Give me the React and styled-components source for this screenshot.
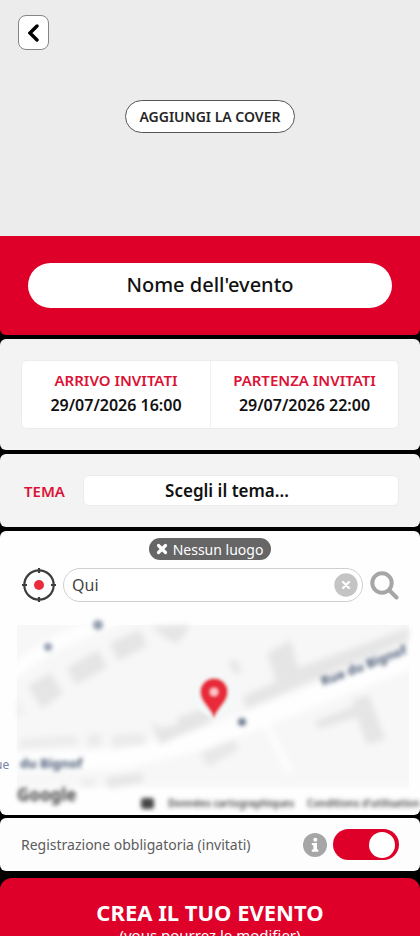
import React, { useState } from "react";
import styled, { createGlobalStyle } from "styled-components";

const RED = "#df0029";

function MapPreview() {
  return (
    <MapDrawing
      viewBox="0 0 420 200"
      preserveAspectRatio="xMidYMid slice"
      role="img"
      aria-label="Mappa"
    >
      <defs>
        <filter id="soft" x="-10%" y="-10%" width="120%" height="120%">
          <feGaussianBlur stdDeviation="3" />
        </filter>
        <filter id="softText" x="-10%" y="-10%" width="120%" height="120%">
          <feGaussianBlur stdDeviation="2.3" />
        </filter>
        <filter id="softPin" x="-50%" y="-50%" width="200%" height="200%">
          <feGaussianBlur stdDeviation="1.8" />
        </filter>
      </defs>

      <g>
        <rect x="17" y="12" width="392" height="164" fill="#f7f7f7" />
        <g filter="url(#soft)">
          {/* roads */}
          <g fill="none" stroke="#fefefe">
            <path d="M0 150 L120 146 L205 126 L430 38" strokeWidth="20" />
            <path d="M267 112 L290 160" strokeWidth="6" />
            <path d="M6 64 L50 32 L118 4" strokeWidth="14" />
            <path d="M0 186 H420" strokeWidth="24" />
          </g>
          {/* buildings */}
          <g fill="#e5e5e5">
            <path d="M28 73 L50 60 L63 80 L42 96Z" />
            <path d="M67 55 L98 37 L107 54 L76 72Z" />
            <path d="M110 30 L140 17 L147 33 L118 48Z" />
            <path d="M152 14 L190 12 L186 20 L176 31 L164 24Z" />
            <path d="M17 85 L25 98 L17 106Z" fill="#eeeeee" />
            <path d="M20 126 L76 122 L78 132 L20 136Z" fill="#ececec" />
            <path d="M87 122 L101 120 L102 133 L88 135Z" fill="#ebebeb" />
            <path d="M112 122 L144 120 L146 132 L112 135Z" fill="#ebebeb" />
            <path d="M151 108 L160 115 L177 112 L178 104 L206 95 L212 108 L160 132Z" />
            <path d="M80 168 L95 165 L96 173 L82 175Z" fill="#ececec" />
            <path d="M106 164 L142 160 L144 169 L108 176Z" fill="#e6e6e6" />
            <path d="M200 140 L234 126 L239 136 L208 154Z" fill="#e8e8e8" />
            <path d="M228 50 L236 47 L242 59 L236 61Z" fill="#e4e4e4" />
            <path d="M243 83 L276 69 L267 40 L291 27 L298 55 L408 15 L409 26 L246 96Z" />
            <path d="M315 108 L354 93 L352 87 L369 82 L385 126 L367 132 L357 104 L319 116Z" />
          </g>
        </g>
      </g>

      <g filter="url(#softText)" fill="#4a5a76">
        <circle cx="48" cy="34" r="4" opacity="0.6" />
        <circle cx="98" cy="12" r="5" opacity="0.6" />
        <circle cx="242" cy="109" r="4" opacity="0.8" />
        <StreetName transform="translate(323 73) rotate(-21)">
          Rue du Bignof
        </StreetName>
        <StreetName x="20" y="155">
          du Bignof
        </StreetName>
      </g>
      <EdgeName x="-5" y="156">
        ue
      </EdgeName>

      <g filter="url(#softText)" fill="#444444">
        <GoogleMark x="17" y="188">
          Google
        </GoogleMark>
        <rect x="141" y="185" width="13" height="11" rx="3" />
        <MapCredit x="168" y="194">
          Données cartographiques
        </MapCredit>
        <MapCredit x="307" y="194">
          Conditions d'utilisation
        </MapCredit>
      </g>

      <g filter="url(#softPin)">
        <circle cx="214" cy="83" r="20" fill="#f3f8f8" />
        <path
          d="M214 105 C210 95 200 89 200 79 A14 14 0 0 1 228 79 C228 89 218 95 214 105Z"
          fill="#e82c3b"
        />
        <circle cx="214" cy="79" r="4" fill="#ffc5c9" />
      </g>
    </MapDrawing>
  );
}

function App() {
  const [name, setName] = useState("");
  const [place, setPlace] = useState("Qui");
  const [registration, setRegistration] = useState(true);

  return (
    <Page>
      <GlobalStyle />

      <Cover>
        <BackButton type="button" aria-label="Indietro">
          <svg width="12" height="20" viewBox="0 0 12 20">
            <path
              d="M9 3 L2 10 L9 17"
              fill="none"
              stroke="#000"
              strokeWidth="3.4"
              strokeLinecap="round"
              strokeLinejoin="miter"
            />
          </svg>
        </BackButton>
        <CoverButton type="button">AGGIUNGI LA COVER</CoverButton>
      </Cover>

      <NamePanel>
        <NameInput
          aria-label="Nome dell'evento"
          placeholder="Nome dell'evento"
          value={name}
          onChange={(event) => setName(event.target.value)}
        />
      </NamePanel>

      <Panel $pad="21px 21px">
        <Dates>
          <DateButton type="button">
            <Caption>ARRIVO INVITATI</Caption>
            <span>29/07/2026 16:00</span>
          </DateButton>
          <DateButton type="button">
            <Caption>PARTENZA INVITATI</Caption>
            <span>29/07/2026 22:00</span>
          </DateButton>
        </Dates>
      </Panel>

      <Panel $pad="21px 21px">
        <ThemeRow>
          <Caption as="label" htmlFor="theme">
            TEMA
          </Caption>
          <ThemeSelect id="theme">
            <option>Scegli il tema...</option>
          </ThemeSelect>
        </ThemeRow>
      </Panel>

      <PlacePanel>
        <PlaceTag type="button">
          <svg width="12" height="12" viewBox="0 0 12 12">
            <path
              d="M2.5 2.5 L9.5 9.5 M9.5 2.5 L2.5 9.5"
              stroke="#fff"
              strokeWidth="3.2"
              strokeLinecap="round"
            />
          </svg>
          Nessun luogo
        </PlaceTag>
        <SearchRow>
          <IconButton type="button" aria-label="La mia posizione">
            <svg width="34" height="34" viewBox="0 0 34 34">
              <g fill="none" stroke="#3d3d3d">
                <circle cx="17" cy="17" r="14.7" strokeWidth="2.2" />
                <path
                  d="M17 0 V5 M17 29 V34 M0 17 H5 M29 17 H34"
                  strokeWidth="2.2"
                />
              </g>
              <circle cx="17" cy="17" r="5" fill="#ea2b3b" />
            </svg>
          </IconButton>
          <SearchField>
            <SearchInput
              aria-label="Luogo"
              value={place}
              onChange={(event) => setPlace(event.target.value)}
            />
            <IconButton
              type="button"
              aria-label="Cancella"
              onClick={() => setPlace("")}
            >
              <svg width="24" height="24" viewBox="0 0 24 24">
                <circle cx="12" cy="12" r="11.7" fill="#c4c4c4" />
                <path
                  d="M9 9 L15 15 M15 9 L9 15"
                  stroke="#fff"
                  strokeWidth="2.4"
                  strokeLinecap="round"
                />
              </svg>
            </IconButton>
          </SearchField>
          <IconButton type="button" aria-label="Cerca">
            <svg width="29" height="29" viewBox="0 0 29 29">
              <g fill="none" stroke="#a6a6a6">
                <circle cx="12" cy="12" r="9.7" strokeWidth="4" />
                <path
                  d="M19.5 19.5 L26.5 26.5"
                  strokeWidth="4"
                  strokeLinecap="round"
                />
              </g>
            </svg>
          </IconButton>
        </SearchRow>
        <MapPreview />
      </PlacePanel>

      <RegistrationPanel>
        <RegistrationLabel htmlFor="registration">
          Registrazione obbligatoria (invitati)
        </RegistrationLabel>
        <IconButton type="button" aria-label="Informazioni">
          <svg width="24" height="24" viewBox="0 0 24 24">
            <circle cx="12" cy="12" r="12" fill="#a6a6a6" />
            <circle cx="12.3" cy="6.8" r="2" fill="#fff" />
            <path
              d="M8.8 10 H14 V16.4 H15.4 V18.7 H8.8 V16.4 H10.4 V12.2 H8.8Z"
              fill="#fff"
            />
          </svg>
        </IconButton>
        <Toggle
          id="registration"
          type="checkbox"
          role="switch"
          checked={registration}
          onChange={(event) => setRegistration(event.target.checked)}
        />
      </RegistrationPanel>

      <CreateButton type="button">
        <CreateTitle>CREA IL TUO EVENTO</CreateTitle>
        <span>(vous pourrez le modifier)</span>
      </CreateButton>
    </Page>
  );
}

export default App;

const GlobalStyle = createGlobalStyle`
  * {
    box-sizing: border-box;
  }

  html {
    scrollbar-width: none;
  }

  body {
    margin: 0;
    background: #000;
  }

  body, button, input, select {
    font-family: "Noto Sans", "Open Sans", sans-serif;
  }

  button {
    cursor: pointer;
  }
`;

const Page = styled.main`
  display: flex;
  flex-direction: column;
  gap: 4px;
`;

const Cover = styled.header`
  display: flex;
  flex-direction: column;
  align-items: center;
  gap: 50px;
  min-height: 236px;
  margin-bottom: -4px;
  padding: 15px 18px;
  background: #ececec;
`;

const BackButton = styled.button`
  display: flex;
  align-items: center;
  justify-content: center;
  align-self: flex-start;
  width: 31px;
  height: 35px;
  padding: 0;
  border: 1px solid #858585;
  border-radius: 8px;
  background: #fff;
`;

const CoverButton = styled.button`
  height: 33px;
  padding: 0 13px;
  border: 1px solid #555;
  border-radius: 17px;
  background: #fff;
  color: #262626;
  font-size: 14px;
  font-weight: 600;
`;

const NamePanel = styled.section`
  padding: 27px 28px;
  border-radius: 0 0 6px 6px;
  background: ${RED};
`;

const NameInput = styled.input`
  display: block;
  width: 100%;
  height: 45px;
  padding: 0 20px 3px;
  border: 0;
  border-radius: 23px;
  background: #fff;
  color: #111;
  font-size: 20px;
  font-weight: 500;
  text-align: center;

  &::placeholder {
    color: #111;
    opacity: 1;
  }
`;

const Panel = styled.section`
  padding: ${(props) => props.$pad};
  border-radius: 6px;
  background: #f3f3f3;
`;

const Dates = styled.div`
  display: grid;
  grid-template-columns: 1fr 1fr;
  border: 1px solid #ececec;
  border-radius: 6px;
  background: #fff;
`;

const DateButton = styled.button`
  display: flex;
  flex-direction: column;
  align-items: center;
  padding: 7px 0 10px;
  border: 0;
  background: none;
  color: #111;
  font-size: 16px;
  font-weight: 600;
  line-height: 25px;

  & + & {
    border-left: 1px solid #f1f1f1;
  }
`;

const Caption = styled.span`
  color: #db1236;
  font-size: 15px;
  font-weight: 600;
`;

const ThemeRow = styled.div`
  display: flex;
  align-items: center;
  gap: 18px;
  padding-left: 3px;
`;

const ThemeSelect = styled.select`
  flex: 1;
  min-width: 0;
  height: 31px;
  padding: 0 28px 0 0;
  border: 1px solid #ececec;
  border-radius: 6px;
  appearance: none;
  background: #fff;
  color: #111;
  font-size: 17px;
  font-weight: 600;
  text-align: center;
  text-align-last: center;
`;

const PlacePanel = styled.section`
  display: flex;
  flex-direction: column;
  align-items: center;
  overflow: hidden;
  padding-top: 7px;
  border-radius: 6px;
  background: #fefefe;
`;

const PlaceTag = styled.button`
  display: flex;
  align-items: center;
  gap: 5px;
  height: 22px;
  margin-bottom: 8px;
  padding: 0 8px 0 7px;
  border: 0;
  border-radius: 11px;
  background: #666;
  color: #fff;
  font-size: 14px;
`;

const SearchRow = styled.div`
  display: flex;
  align-items: center;
  gap: 7px;
  width: 100%;
  padding: 0 21px 0 22px;
`;

const IconButton = styled.button`
  display: flex;
  flex: none;
  padding: 0;
  border: 0;
  background: none;
`;

const SearchField = styled.div`
  display: flex;
  flex: 1;
  align-items: center;
  min-width: 0;
  height: 34px;
  padding: 0 4px 0 8px;
  border: 1px solid #cfcfcf;
  border-radius: 17px;
  background: #fff;
`;

const SearchInput = styled.input`
  flex: 1;
  min-width: 0;
  padding: 0;
  border: 0;
  background: none;
  color: #444;
  font-size: 16px;
  outline: none;
`;

const MapDrawing = styled.svg`
  display: block;
  width: 100%;
  height: 200px;
  margin: 11px 0 2px;
`;

const StreetName = styled.text`
  font: 700 13px "Noto Sans", sans-serif;
`;

const EdgeName = styled.text`
  fill: #7782a5;
  font: 400 12px "Noto Sans", sans-serif;
`;

const GoogleMark = styled.text`
  font: 700 17px "Noto Sans", sans-serif;
`;

const MapCredit = styled.text`
  font: 600 10px "Noto Sans", sans-serif;
`;

const RegistrationPanel = styled.section`
  display: flex;
  align-items: center;
  min-height: 53px;
  margin-top: -1px;
  padding: 0 21px;
  border-radius: 6px;
  background: #fdfdfd;
`;

const RegistrationLabel = styled.label`
  flex: 1;
  color: #5c5c5c;
  font-size: 14px;
`;

const Toggle = styled.input`
  display: flex;
  align-items: center;
  width: 66px;
  height: 31px;
  margin: 0 0 0 6px;
  padding: 0 4px;
  border-radius: 16px;
  appearance: none;
  background: #bbb;
  cursor: pointer;

  &::before {
    content: "";
    width: 26px;
    height: 26px;
    border-radius: 50%;
    background: #fff;
  }

  &:checked {
    justify-content: flex-end;
    background: ${RED};
  }
`;

const CreateButton = styled.button`
  display: flex;
  flex-direction: column;
  align-items: center;
  margin-top: 3px;
  padding: 20px 20px 24px;
  border: 0;
  border-radius: 12px 12px 0 0;
  background: ${RED};
  color: #fff;
  font-size: 15px;
  line-height: 18px;
`;

const CreateTitle = styled.strong`
  font-size: 22px;
  font-weight: 700;
  line-height: 28px;
`;
